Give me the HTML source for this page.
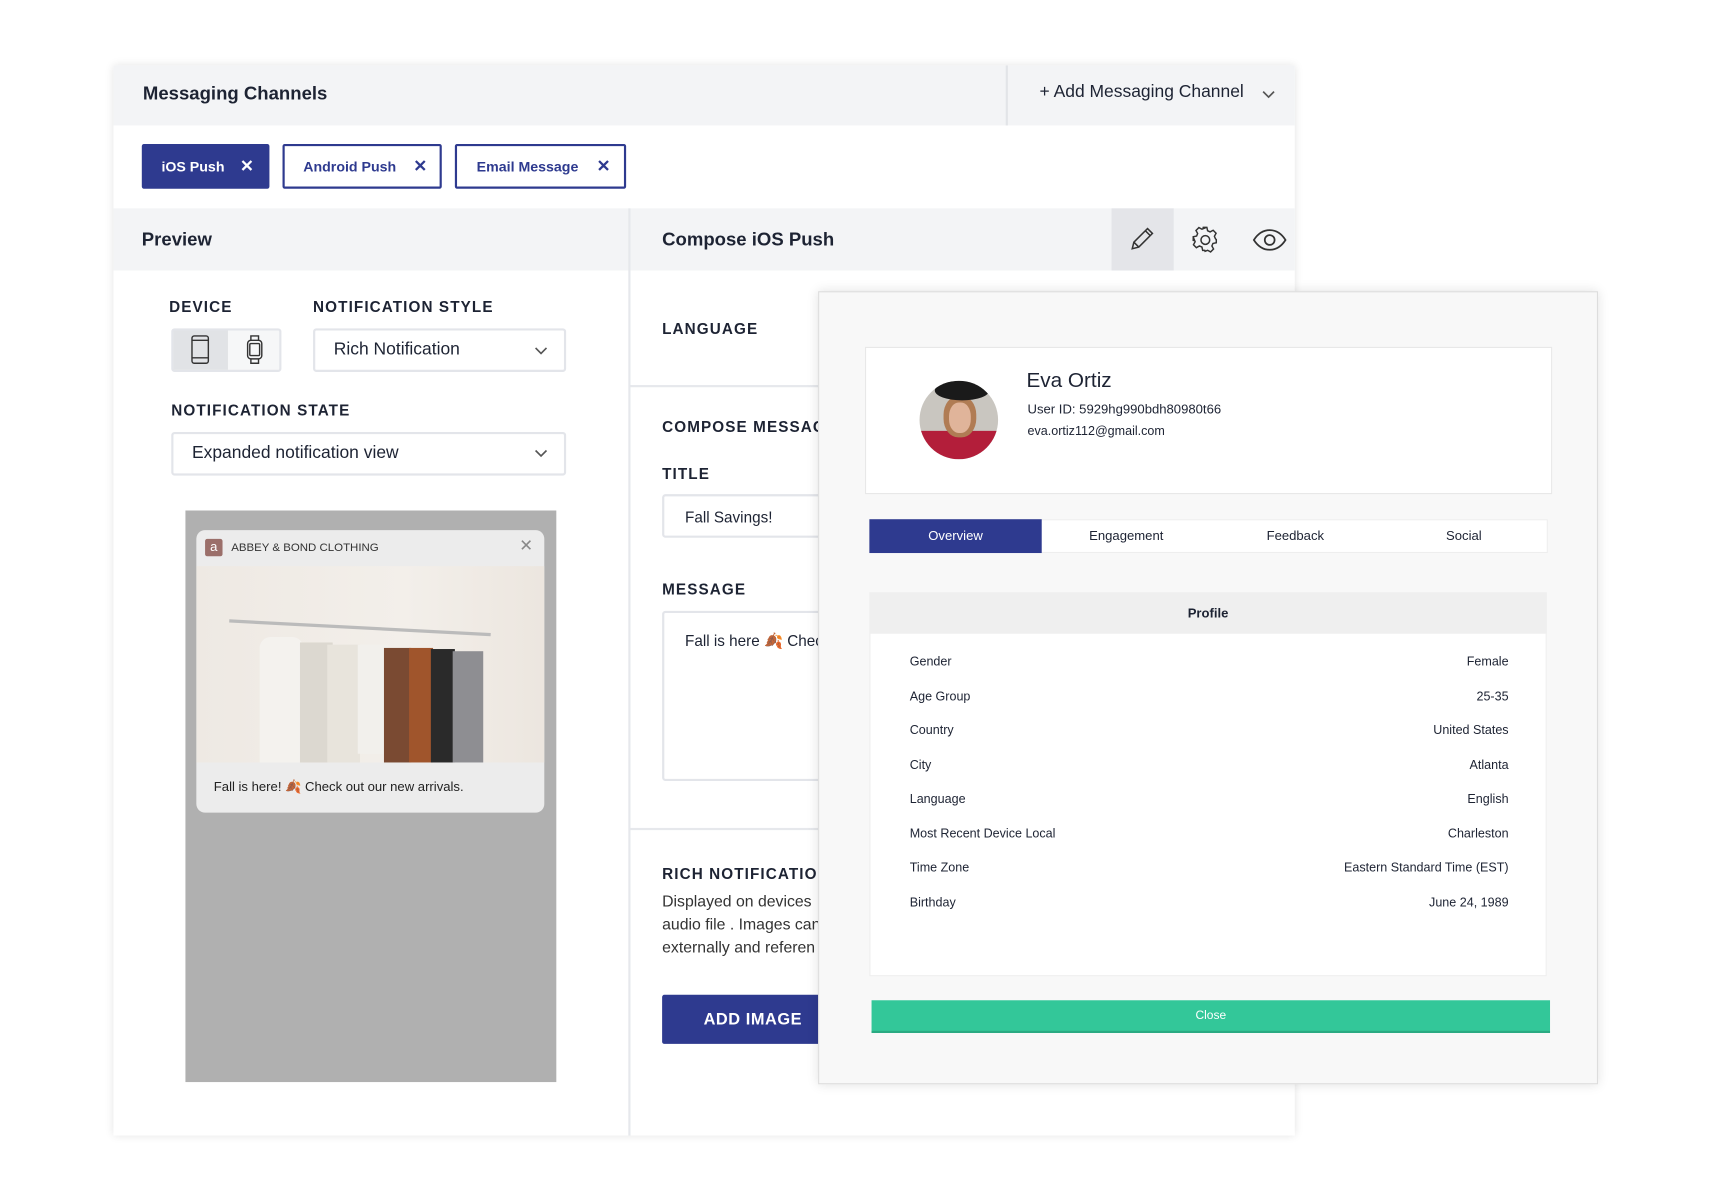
<!DOCTYPE html>
<html><head><meta charset="utf-8"><style>
html,body{margin:0;padding:0;background:#fff;width:1710px;height:1200px;overflow:hidden}
#s{position:absolute;left:0;top:0;width:1560px;height:1095px;transform:scale(1.0908);transform-origin:0 0;font-family:"Liberation Sans",sans-serif;color:#1d2333}
.a{position:absolute}
.lbl{position:absolute;font-size:14px;font-weight:bold;letter-spacing:1px;color:#1d2333}
.chip{position:absolute;top:132px;height:37px;border:2px solid #2e3a8f;border-radius:2px;color:#2e3a8f;font-size:13px;font-weight:bold;line-height:37px;box-sizing:content-box}
.sel{position:absolute;border:2px solid #e3e5ea;border-radius:3px;background:#fff;font-size:16px;box-sizing:border-box}
.row{position:absolute;left:834px;width:549px;font-size:11.5px;color:#1d2333}
.row span{float:right}
</style></head><body><div id="s">
<div class="a" style="left:104px;top:60px;width:1083px;height:981px;background:#fff;box-shadow:0 0 8px rgba(0,0,0,.12)"></div>
<div class="a" style="left:104px;top:60px;width:1083px;height:55px;background:#f3f4f6"></div>
<div class="a" style="left:922px;top:60px;width:2px;height:55px;background:#e2e4e8"></div>
<div class="a" style="left:131px;top:76px;font-size:17px;font-weight:bold">Messaging Channels</div>
<div class="a" style="left:953px;top:76px;font-size:16px">+ Add Messaging Channel</div>
<svg class="a" style="left:1157px;top:81px" width="12" height="10"><path d="M1 3l5 5 5-5" fill="none" stroke="#555" stroke-width="1.5"/></svg>
<div class="chip" style="left:130px;width:113px;background:#2e3a8f;color:#fff"><span style="margin-left:16px">iOS Push</span><span style="position:absolute;left:88px;font-size:15px">✕</span></div>
<div class="chip" style="left:259px;width:142px"><span style="margin-left:17px">Android Push</span><span style="position:absolute;left:118px;font-size:15px">✕</span></div>
<div class="chip" style="left:417px;width:153px"><span style="margin-left:18px">Email Message</span><span style="position:absolute;left:128px;font-size:15px">✕</span></div>
<div class="a" style="left:104px;top:191px;width:1083px;height:57px;background:#f3f4f6"></div>
<div class="a" style="left:576px;top:191px;width:2px;height:850px;background:#e6e8ec"></div>
<div class="a" style="left:130px;top:210px;font-size:17px;font-weight:bold">Preview</div>
<div class="a" style="left:607px;top:210px;font-size:17px;font-weight:bold">Compose iOS Push</div>
<div class="a" style="left:1019px;top:191px;width:57px;height:57px;background:#e4e5e9"></div>
<svg class="a" style="left:1034px;top:206px" width="26" height="26" fill="none" stroke="#333" stroke-width="1.4"><path d="M4 22l1.5-6L18 3.5l4.5 4.5L10 20.5zM5.5 16l4.5 4.5M16 5.5l4.5 4.5"/></svg>
<svg class="a" style="left:1092px;top:207px" width="26" height="26" fill="none" stroke="#333" stroke-width="1.4"><circle cx="13" cy="13" r="4"/><path d="M11 2h4l.7 3.2 2.4 1.2 2.9-1.6 2.8 2.8-1.6 2.9 1 2.4L24 13.7v3l-3.2.7-1 2.4 1.6 2.9-2.8 2.8-2.9-1.6-2.4 1L13 24h-2l-.7-3.2-2.4-1-2.9 1.6-2.8-2.8 1.6-2.9-1-2.4L2 15v-4l3.2-.7 1-2.4-1.6-2.9 2.8-2.8 2.9 1.6 2.4-1z" transform="translate(0 -.5) scale(.96)"/></svg>
<svg class="a" style="left:1148px;top:209px" width="32" height="22" fill="none" stroke="#333" stroke-width="1.6"><path d="M1.5 11C6 4 11 2 16 2s10 2 14.5 9C26 18 21 20 16 20S6 18 1.5 11z"/><circle cx="16" cy="11" r="4.5"/></svg>
<div class="lbl" style="left:155px;top:273px">DEVICE</div>
<div class="lbl" style="left:287px;top:273px">NOTIFICATION STYLE</div>
<div class="a" style="left:157px;top:301px;width:101px;height:40px;border:2px solid #e3e5ea;border-radius:3px;box-sizing:border-box;background:#f6f7f8"></div>
<div class="a" style="left:159px;top:303px;width:50px;height:36px;background:#e1e3e6"></div>
<svg class="a" style="left:174px;top:307px" width="20" height="28" fill="none" stroke="#333" stroke-width="1.3"><rect x="2" y="1" width="15" height="25" rx="2"/><path d="M2 21h15M2 5h15"/></svg>
<svg class="a" style="left:224px;top:307px" width="20" height="28" fill="none" stroke="#333" stroke-width="1.3"><rect x="3" y="5" width="13" height="17" rx="3"/><rect x="5" y="8" width="9" height="11" rx="1"/><path d="M6 5V1h7v4M6 22v4h7v-4"/></svg>
<div class="sel" style="left:287px;top:301px;width:232px;height:40px;padding:9px 0 0 17px">Rich Notification</div>
<svg class="a" style="left:490px;top:316px" width="12" height="10"><path d="M1 3l5 5 5-5" fill="none" stroke="#555" stroke-width="1.5"/></svg>
<div class="lbl" style="left:157px;top:368px">NOTIFICATION STATE</div>
<div class="sel" style="left:157px;top:396px;width:362px;height:40px;padding:9px 0 0 17px">Expanded notification view</div>
<svg class="a" style="left:490px;top:410px" width="12" height="10"><path d="M1 3l5 5 5-5" fill="none" stroke="#555" stroke-width="1.5"/></svg>
<div class="a" style="left:170px;top:468px;width:340px;height:524px;background:#b0b0b0"></div>
<div class="a" style="left:180px;top:486px;width:319px;height:259px;background:#ececec;border-radius:8px;overflow:hidden">
 <div class="a" style="left:8px;top:8px;width:16px;height:16px;background:#9b6f6a;border-radius:2px;color:#fff;font-size:12px;text-align:center;line-height:15px">a</div>
 <div class="a" style="left:32px;top:10px;font-size:10.5px;color:#333">ABBEY &amp; BOND CLOTHING</div>
 <div class="a" style="left:296px;top:5px;font-size:15px;color:#888">✕</div>
 <div class="a" style="left:0;top:33px;width:319px;height:180px;background:linear-gradient(90deg,#eee9e3,#f3efea 60%,#ece6df)">
  <div class="a" style="left:30px;top:55px;width:240px;height:3px;background:#bbb;transform:rotate(3deg)"></div>
  <div class="a" style="left:58px;top:65px;width:40px;height:115px;background:#f4f2ee;border-radius:10px 10px 0 0"></div>
  <div class="a" style="left:95px;top:70px;width:30px;height:110px;background:#dcd8d0"></div>
  <div class="a" style="left:120px;top:72px;width:30px;height:108px;background:#e8e4dc"></div>
  <div class="a" style="left:148px;top:72px;width:28px;height:100px;background:#f2f0ec"></div>
  <div class="a" style="left:172px;top:75px;width:25px;height:105px;background:#7a4a32"></div>
  <div class="a" style="left:195px;top:75px;width:22px;height:105px;background:#a0552c"></div>
  <div class="a" style="left:215px;top:76px;width:22px;height:104px;background:#2a2a2a"></div>
  <div class="a" style="left:235px;top:78px;width:28px;height:102px;background:#8e8e92"></div>
 </div>
 <div class="a" style="left:16px;top:228px;font-size:12px;color:#222">Fall is here! 🍂 Check out our new arrivals.</div>
</div>
<div class="lbl" style="left:607px;top:293px">LANGUAGE</div>
<div class="a" style="left:578px;top:353px;width:609px;height:2px;background:#e6e8ec"></div>
<div class="lbl" style="left:607px;top:383px">COMPOSE MESSAGE</div>
<div class="lbl" style="left:607px;top:426px">TITLE</div>
<div class="sel" style="left:607px;top:453px;width:300px;height:40px;padding:11px 0 0 19px;font-size:14px">Fall Savings!</div>
<div class="lbl" style="left:607px;top:532px">MESSAGE</div>
<div class="sel" style="left:607px;top:560px;width:300px;height:156px;padding:17px 0 0 19px;font-size:14px">Fall is here 🍂 Check</div>
<div class="a" style="left:578px;top:759px;width:609px;height:2px;background:#e6e8ec"></div>
<div class="lbl" style="left:607px;top:793px">RICH NOTIFICATION</div>
<div class="a" style="left:607px;top:817px;font-size:14.5px;line-height:21px;color:#333">Displayed on devices<br>audio file . Images can<br>externally and referen</div>
<div class="a" style="left:607px;top:912px;width:200px;height:45px;background:#2e3a8f;border-radius:2px;color:#fff;font-size:15px;font-weight:bold;letter-spacing:.5px;line-height:45px;padding-left:38px;box-sizing:border-box">ADD IMAGE</div>
<div class="a" style="left:750px;top:267px;width:715px;height:727px;background:#f8f8f8;border:1px solid #ddd;box-sizing:border-box;box-shadow:0 0 10px rgba(0,0,0,.12)"></div>
<div class="a" style="left:793px;top:318px;width:630px;height:135px;background:#fff;border:1px solid #e8e8e8;box-sizing:border-box"></div>
<div class="a" style="left:843px;top:349px;width:72px;height:72px;border-radius:50%;overflow:hidden;background:#c9c6c0">
 <div class="a" style="left:0;top:46px;width:72px;height:26px;background:#b31e3a"></div>
 <div class="a" style="left:22px;top:14px;width:30px;height:38px;border-radius:45%;background:#b07c54"></div>
 <div class="a" style="left:27px;top:20px;width:20px;height:28px;border-radius:45%;background:#e0b49a"></div>
 <div class="a" style="left:14px;top:0;width:50px;height:18px;border-radius:50%;background:#1a1a1a"></div>
</div>
<div class="a" style="left:941px;top:339px;font-size:19px">Eva Ortiz</div>
<div class="a" style="left:942px;top:368px;font-size:12px">User ID: 5929hg990bdh80980t66</div>
<div class="a" style="left:942px;top:390px;font-size:11.5px">eva.ortiz112@gmail.com</div>
<div class="a" style="left:797px;top:476px;width:622px;height:31px;background:#fff;border:1px solid #eee;box-sizing:border-box"></div>
<div class="a" style="left:797px;top:476px;width:158px;height:31px;background:#2e3a8f;color:#fff;font-size:12px;text-align:center;line-height:31px">Overview</div>
<div class="a" style="left:955px;top:476px;width:155px;font-size:12px;text-align:center;line-height:31px">Engagement</div>
<div class="a" style="left:1110px;top:476px;width:155px;font-size:12px;text-align:center;line-height:31px">Feedback</div>
<div class="a" style="left:1265px;top:476px;width:154px;font-size:12px;text-align:center;line-height:31px">Social</div>
<div class="a" style="left:797px;top:543px;width:621px;height:352px;background:#fff;border:1px solid #eee;box-sizing:border-box"></div>
<div class="a" style="left:797px;top:543px;width:621px;height:38px;background:#efefef;font-size:12px;font-weight:bold;text-align:center;line-height:38px">Profile</div>
<div class="row" style="top:601px">Gender<span>Female</span></div>
<div class="row" style="top:633px">Age Group<span>25-35</span></div>
<div class="row" style="top:664px">Country<span>United States</span></div>
<div class="row" style="top:696px">City<span>Atlanta</span></div>
<div class="row" style="top:727px">Language<span>English</span></div>
<div class="row" style="top:759px">Most Recent Device Local<span>Charleston</span></div>
<div class="row" style="top:790px">Time Zone<span>Eastern Standard Time (EST)</span></div>
<div class="row" style="top:822px">Birthday<span>June 24, 1989</span></div>
<div class="a" style="left:799px;top:917px;width:622px;height:30px;background:#33c799;color:#fff;font-size:11px;text-align:center;line-height:28px;border-bottom:2px solid #2aaa82;box-sizing:border-box">Close</div>
</div></body></html>
